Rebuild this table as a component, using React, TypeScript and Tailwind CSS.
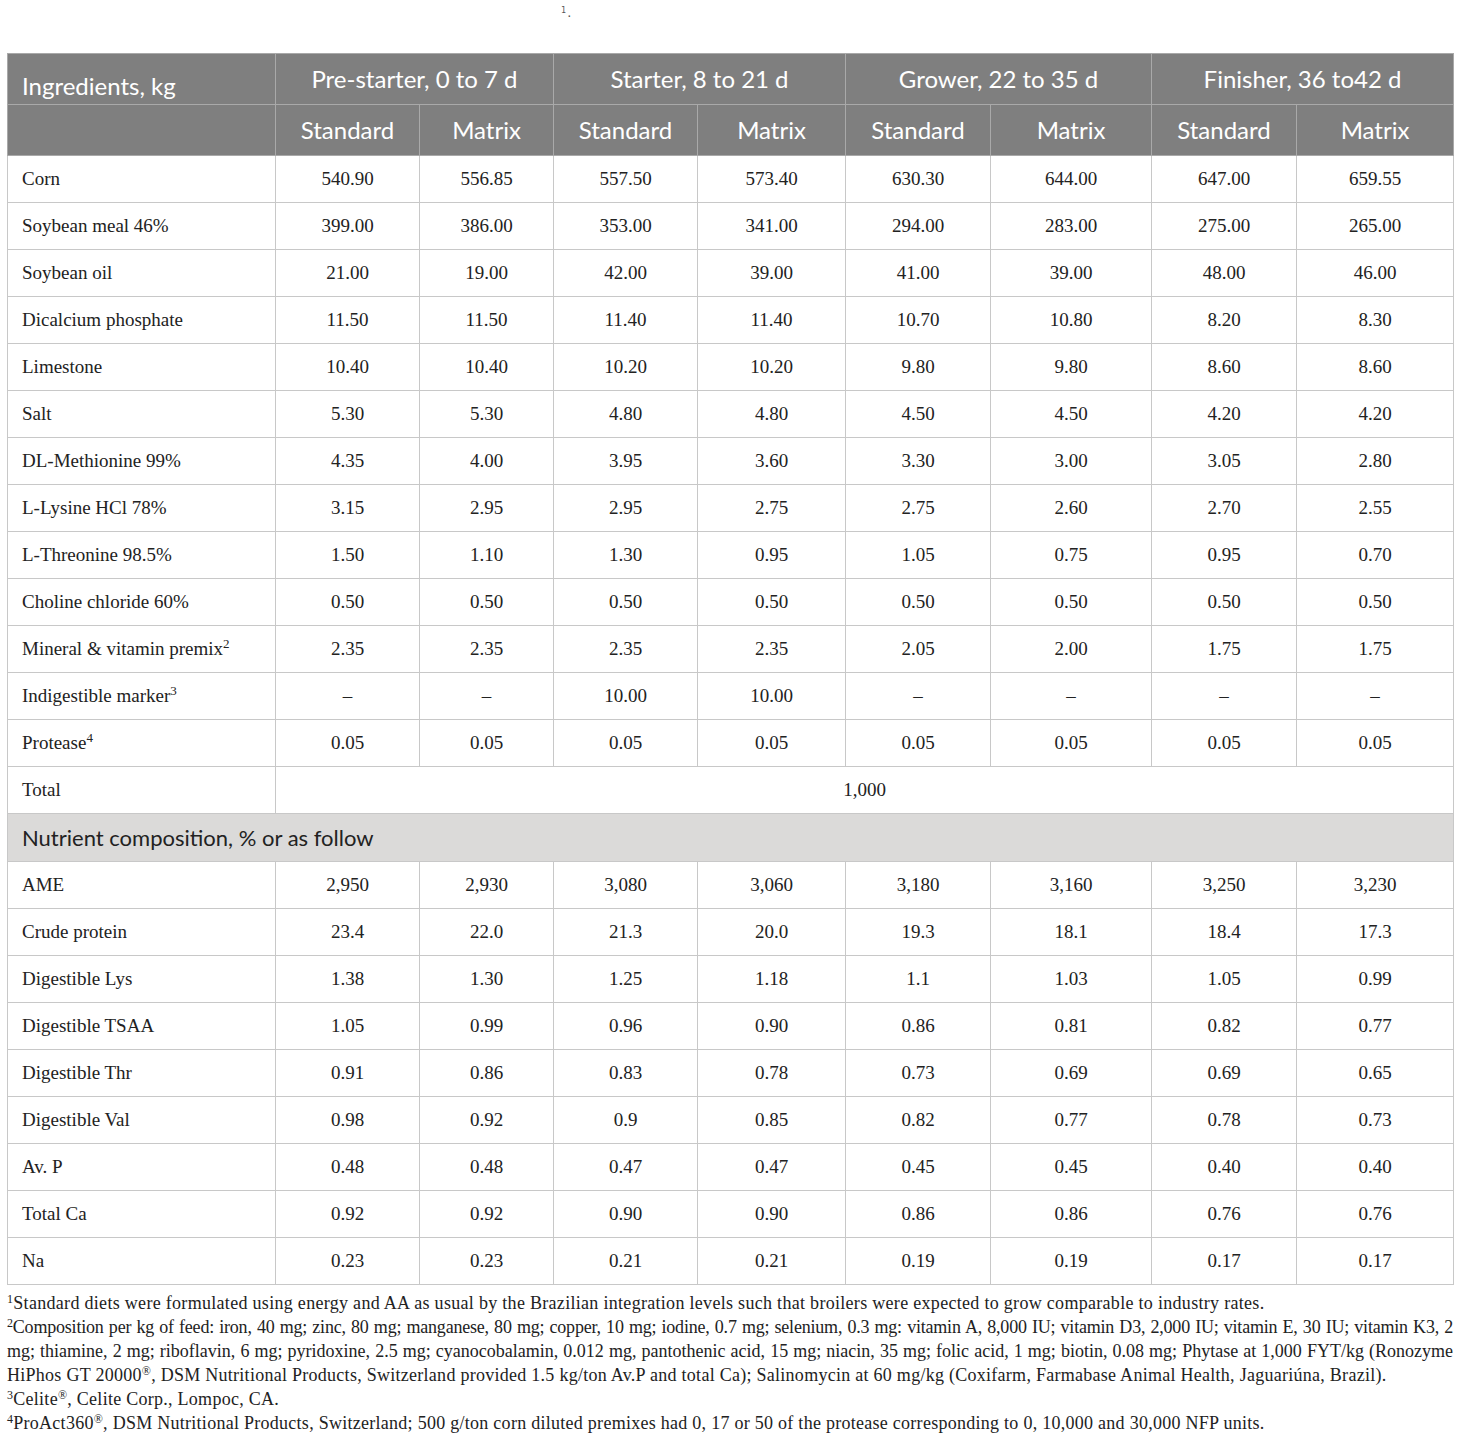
// Diet composition table (ingredients + nutrient composition) with footnotes.
import React from 'react'

const SERIF = { fontFamily: '"Liberation Serif", "Times New Roman", serif' }
const SANS = { fontFamily: 'Lato, "Open Sans", sans-serif' }

// Column widths in px, measured from the reference.
const COLS = [268, 144, 134, 144, 148, 145, 161, 145, 157]

const PHASES = ['Pre-starter, 0 to 7 d', 'Starter, 8 to 21 d', 'Grower, 22 to 35 d', 'Finisher, 36 to42 d']

type Row = { label: string; sup?: string; values: string[] }

const INGREDIENTS: Row[] = [
  { label: 'Corn', values: ['540.90', '556.85', '557.50', '573.40', '630.30', '644.00', '647.00', '659.55'] },
  { label: 'Soybean meal 46%', values: ['399.00', '386.00', '353.00', '341.00', '294.00', '283.00', '275.00', '265.00'] },
  { label: 'Soybean oil', values: ['21.00', '19.00', '42.00', '39.00', '41.00', '39.00', '48.00', '46.00'] },
  { label: 'Dicalcium phosphate', values: ['11.50', '11.50', '11.40', '11.40', '10.70', '10.80', '8.20', '8.30'] },
  { label: 'Limestone', values: ['10.40', '10.40', '10.20', '10.20', '9.80', '9.80', '8.60', '8.60'] },
  { label: 'Salt', values: ['5.30', '5.30', '4.80', '4.80', '4.50', '4.50', '4.20', '4.20'] },
  { label: 'DL-Methionine 99%', values: ['4.35', '4.00', '3.95', '3.60', '3.30', '3.00', '3.05', '2.80'] },
  { label: 'L-Lysine HCl 78%', values: ['3.15', '2.95', '2.95', '2.75', '2.75', '2.60', '2.70', '2.55'] },
  { label: 'L-Threonine 98.5%', values: ['1.50', '1.10', '1.30', '0.95', '1.05', '0.75', '0.95', '0.70'] },
  { label: 'Choline chloride 60%', values: ['0.50', '0.50', '0.50', '0.50', '0.50', '0.50', '0.50', '0.50'] },
  { label: 'Mineral & vitamin premix', sup: '2', values: ['2.35', '2.35', '2.35', '2.35', '2.05', '2.00', '1.75', '1.75'] },
  { label: 'Indigestible marker', sup: '3', values: ['–', '–', '10.00', '10.00', '–', '–', '–', '–'] },
  { label: 'Protease', sup: '4', values: ['0.05', '0.05', '0.05', '0.05', '0.05', '0.05', '0.05', '0.05'] },
]

const NUTRIENTS: Row[] = [
  { label: 'AME', values: ['2,950', '2,930', '3,080', '3,060', '3,180', '3,160', '3,250', '3,230'] },
  { label: 'Crude protein', values: ['23.4', '22.0', '21.3', '20.0', '19.3', '18.1', '18.4', '17.3'] },
  { label: 'Digestible Lys', values: ['1.38', '1.30', '1.25', '1.18', '1.1', '1.03', '1.05', '0.99'] },
  { label: 'Digestible TSAA', values: ['1.05', '0.99', '0.96', '0.90', '0.86', '0.81', '0.82', '0.77'] },
  { label: 'Digestible Thr', values: ['0.91', '0.86', '0.83', '0.78', '0.73', '0.69', '0.69', '0.65'] },
  { label: 'Digestible Val', values: ['0.98', '0.92', '0.9', '0.85', '0.82', '0.77', '0.78', '0.73'] },
  { label: 'Av. P', values: ['0.48', '0.48', '0.47', '0.47', '0.45', '0.45', '0.40', '0.40'] },
  { label: 'Total Ca', values: ['0.92', '0.92', '0.90', '0.90', '0.86', '0.86', '0.76', '0.76'] },
  { label: 'Na', values: ['0.23', '0.23', '0.21', '0.21', '0.19', '0.19', '0.17', '0.17'] },
]

function DataRow({ row }: { row: Row }) {
  return (
    <tr className="h-[47px]">
      <td className="border border-[#c8c8c8] px-[14px] text-left text-[19px] text-[#222]" style={SERIF}>
        {row.label}
        {row.sup && <sup className="text-[13px]">{row.sup}</sup>}
      </td>
      {row.values.map((v, i) => (
        <td key={i} className="border border-[#c8c8c8] text-center text-[19px] text-[#222]" style={SERIF}>
          {v}
        </td>
      ))}
    </tr>
  )
}

function Sup({ n }: { n: string }) {
  return <sup className="text-[12px]">{n}</sup>
}

export default function App() {
  return (
    <div className="bg-white w-[1460px] min-h-[1441px] px-[7px]">
      {/* stray caption marker above the table */}
      <div className="h-[53px] pl-[554px] pt-[8px] text-[11px] text-[#555] leading-none" style={{ fontFamily: '"DejaVu Sans Mono", monospace' }}>
        <sup>1</sup>.
      </div>

      <table className="border-collapse table-fixed w-[1446px]">
        <colgroup>
          {COLS.map((w, i) => (
            <col key={i} style={{ width: w }} />
          ))}
        </colgroup>
        <thead>
          <tr className="h-[51px] bg-[#7f7f7f] text-white" style={SANS}>
            <th className="border border-[#a9a9a9] px-[14px] pt-[14px] text-left font-normal text-[24px]">Ingredients, kg</th>
            {PHASES.map(p => (
              <th key={p} colSpan={2} className="border border-[#a9a9a9] font-normal text-[24px]">
                {p}
              </th>
            ))}
          </tr>
          <tr className="h-[51px] bg-[#7f7f7f] text-white" style={SANS}>
            <th className="border border-[#a9a9a9]" />
            {PHASES.map(p => (
              <React.Fragment key={p}>
                <th className="border border-[#a9a9a9] font-normal text-[24px]">Standard</th>
                <th className="border border-[#a9a9a9] font-normal text-[24px]">Matrix</th>
              </React.Fragment>
            ))}
          </tr>
        </thead>
        <tbody>
          {INGREDIENTS.map(r => (
            <DataRow key={r.label} row={r} />
          ))}
          <tr className="h-[47px]">
            <td className="border border-[#c8c8c8] px-[14px] text-[19px] text-[#222]" style={SERIF}>Total</td>
            <td colSpan={8} className="border border-[#c8c8c8] text-center text-[19px] text-[#222]" style={SERIF}>1,000</td>
          </tr>
          <tr className="h-[48px] bg-[#dbdad9]">
            <td colSpan={9} className="border border-[#c8c8c8] px-[14px] text-[22px] text-[#222]" style={SANS}>
              Nutrient composition, % or as follow
            </td>
          </tr>
          {NUTRIENTS.map(r => (
            <DataRow key={r.label} row={r} />
          ))}
        </tbody>
      </table>

      {/* footnotes: each printed line kept as in the source; long lines justified */}
      <div className="pt-[6px] text-[18px] leading-[24px] text-[#222]" style={SERIF}>
        <p className="whitespace-nowrap tracking-[0.3px]"><Sup n="1" />Standard diets were formulated using energy and AA as usual by the Brazilian integration levels such that broilers were expected to grow comparable to industry rates.</p>
        <p className="whitespace-nowrap text-justify [text-align-last:justify] tracking-[-0.2px]">
          <Sup n="2" />Composition per kg of feed: iron, 40 mg; zinc, 80 mg; manganese, 80 mg; copper, 10 mg; iodine, 0.7 mg; selenium, 0.3 mg: vitamin A, 8,000 IU; vitamin D3, 2,000 IU; vitamin E, 30 IU; vitamin K3, 2
        </p>
        <p className="whitespace-nowrap text-justify [text-align-last:justify]">
          mg; thiamine, 2 mg; riboflavin, 6 mg; pyridoxine, 2.5 mg; cyanocobalamin, 0.012 mg, pantothenic acid, 15 mg; niacin, 35 mg; folic acid, 1 mg; biotin, 0.08 mg; Phytase at 1,000 FYT/kg (Ronozyme
        </p>
        <p className="whitespace-nowrap tracking-[0.27px]">
          HiPhos GT 20000<Sup n="®" />, DSM Nutritional Products, Switzerland provided 1.5 kg/ton Av.P and total Ca); Salinomycin at 60 mg/kg (Coxifarm, Farmabase Animal Health, Jaguariúna, Brazil).
        </p>
        <p className="whitespace-nowrap tracking-[0.27px]"><Sup n="3" />Celite<Sup n="®" />, Celite Corp., Lompoc, CA.</p>
        <p className="whitespace-nowrap tracking-[0.27px]"><Sup n="4" />ProAct360<Sup n="®" />, DSM Nutritional Products, Switzerland; 500 g/ton corn diluted premixes had 0, 17 or 50 of the protease corresponding to 0, 10,000 and 30,000 NFP units.</p>
      </div>
    </div>
  )
}
